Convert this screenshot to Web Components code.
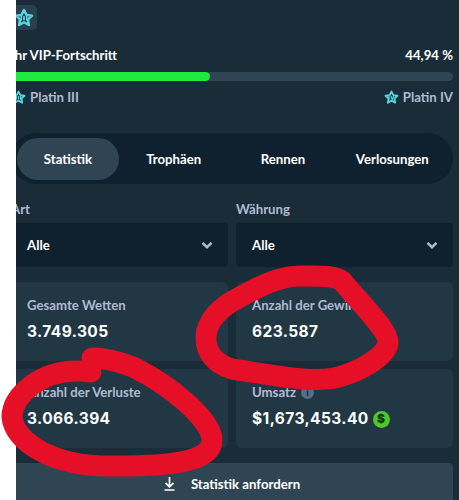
<!DOCTYPE html>
<html lang="de">
<head>
<meta charset="utf-8">
<title>VIP Statistik</title>
<style>
  html, body { margin: 0; height: 100%; background: #fff; overflow: hidden; }
  body { font-family: Lato, "Liberation Sans", sans-serif; }
</style>
</head>
<body>
<stats-page></stats-page>
<scribble-marks></scribble-marks>

<script>
const font = 'Lato, "Liberation Sans", sans-serif';

class StarIcon extends HTMLElement {
  constructor() {
    super();
    const size = this.getAttribute('size') || 16;
    const rank = this.getAttribute('rank') || 'III';
    const bars = rank === 'III'
      ? '<path d="M8.8 9.5v5.5M12 9.5v5.5M15.2 9.5v5.5" stroke-width="2" fill="none"/>'
      : '<path d="M8 9.5v5.5M11 9.5l2.2 5.5 2.3-5.5" stroke-width="2" fill="none"/>';
    this.attachShadow({ mode: 'open' }).innerHTML = `
      <style>
        :host { display: inline-flex; width: ${size}px; height: ${size}px; flex: none; color: #55d5df; }
        svg { width: 100%; height: 100%; stroke: currentColor; }
      </style>
      <svg viewBox="0 0 24 24">
        <path d="M12 2.5l2.9 5.8 6.6.9-4.8 4.5 1.2 6.6-5.9-3.2-5.9 3.2 1.2-6.6-4.8-4.5 6.6-.9z" fill="#1a2c38" stroke-width="3" stroke-linejoin="round"/>
        ${bars}
      </svg>`;
  }
}

const progressTemplate = document.createElement('template');
progressTemplate.innerHTML = `
  <style>
    :host { display: block; color: #fff; font-weight: 700; font-size: 13.2px; }
    .badge {
      width: 26px; height: 25px; border-radius: 5px; background: #2a3f4c;
      display: flex; align-items: center; justify-content: center; margin-bottom: 15px;
    }
    .row { display: flex; justify-content: space-between; align-items: center; height: 20px; }
    .track { height: 9px; border-radius: 5px; background: #2f4553; margin-top: 7px; }
    .fill { width: 44.94%; height: 100%; border-radius: 5px; background: #1fe83e; }
    .levels { margin-top: 6px; color: #b1bad3; }
    .level { display: flex; align-items: center; gap: 4px; }
  </style>
  <div class="badge"><star-icon size="20" rank="III"></star-icon></div>
  <div class="row"><span>Ihr VIP-Fortschritt</span><span>44,94 %</span></div>
  <div class="track"><div class="fill"></div></div>
  <div class="row levels">
    <span class="level"><star-icon size="15" rank="III"></star-icon>Platin III</span>
    <span class="level"><star-icon size="15" rank="IV"></star-icon>Platin IV</span>
  </div>
`;
class VipProgress extends HTMLElement {
  constructor() {
    super();
    this.attachShadow({ mode: 'open' }).appendChild(progressTemplate.content.cloneNode(true));
  }
}

const tabsTemplate = document.createElement('template');
tabsTemplate.innerHTML = `
  <style>
    :host {
      display: grid; grid-template-columns: 102px 1fr 1fr 1fr; align-items: stretch;
      height: 42px; padding: 5px 6px 4px; background: #0f212e; border-radius: 26px;
      color: #fff; font-weight: 700; font-size: 13.2px; text-align: center;
    }
    span { display: flex; align-items: center; justify-content: center; border-radius: 21px; }
    .active { background: #2f4553; }
  </style>
  <span class="active">Statistik</span><span>Trophäen</span><span>Rennen</span><span>Verlosungen</span>
`;
class TabBar extends HTMLElement {
  constructor() {
    super();
    this.attachShadow({ mode: 'open' }).appendChild(tabsTemplate.content.cloneNode(true));
  }
}

class FilterSelect extends HTMLElement {
  constructor() {
    super();
    this.attachShadow({ mode: 'open' }).innerHTML = `
      <style>
        :host { display: block; font-weight: 700; font-size: 13.2px; }
        label { display: block; color: #b1bad3; height: 16px; line-height: 16px; margin-bottom: 6px; }
        .box {
          height: 44px; box-sizing: border-box; padding: 0 15px 0 16px; border-radius: 4px;
          background: #0f212e; color: #fff; display: flex; align-items: center; justify-content: space-between;
        }
        svg { width: 12px; height: 12px; fill: none; stroke: #b1bad3; stroke-width: 2.4; }
      </style>
      <label>${this.getAttribute('label')}</label>
      <div class="box"><slot></slot>
        <svg viewBox="0 0 12 12"><path d="M1.5 3.8L6 8.2l4.5-4.4"/></svg>
      </div>`;
  }
}

class StatCard extends HTMLElement {
  constructor() {
    super();
    this.attachShadow({ mode: 'open' }).innerHTML = `
      <style>
        :host {
          display: flex; flex-direction: column; height: 79px; box-sizing: border-box;
          padding: 15px 16px 0; border-radius: 6px; background: #213743;
        }
        .label { color: #b1bad3; font-weight: 700; font-size: 13.2px; line-height: 16px; display: flex; align-items: center; gap: 5px; }
        .value {
          color: #fff; font-family: Inter, ${font}; font-weight: 700; font-size: 15.5px; line-height: 20px;
          margin-top: 9px; display: flex; align-items: center; gap: 4px; letter-spacing: .4px;
        }
      </style>
      <div class="label">${this.getAttribute('label')}<slot name="hint"></slot></div>
      <div class="value"><slot></slot><slot name="suffix"></slot></div>`;
  }
}

const buttonTemplate = document.createElement('template');
buttonTemplate.innerHTML = `
  <style>
    :host {
      display: flex; align-items: center; justify-content: center; gap: 16px;
      height: 42px; border-radius: 4px; background: #2f4553;
      color: #fff; font-weight: 700; font-size: 13.2px;
    }
    svg { width: 11px; height: 14px; fill: none; stroke: #fff; stroke-width: 1.7; }
  </style>
  <svg viewBox="0 0 11 14"><path d="M5.5 0v9.5M1.5 5.8l4 4 4-4M0.5 13h10"/></svg>
  <span><slot></slot></span>
`;
class RequestButton extends HTMLElement {
  constructor() {
    super();
    this.attachShadow({ mode: 'open' }).appendChild(buttonTemplate.content.cloneNode(true));
  }
}

const pageTemplate = document.createElement('template');
pageTemplate.innerHTML = `
  <style>
    :host {
      display: block; height: 500px; margin-left: 16px; overflow: hidden;
      background: #1a2c38; font-family: ${font};
    }
    .content { margin-left: -5px; padding: 5px 6px 0 0; }
    tab-bar { margin-top: 26px; }
    .filters, .cards { display: grid; grid-template-columns: 1fr 1fr; gap: 8px; }
    .filters { margin-top: 17px; }
    .cards { margin-top: 15px; }
    request-button { margin-top: 15px; }
    .info {
      width: 13px; height: 13px; border-radius: 50%; background: #557086; color: #1a2c38;
      font-size: 10px; font-weight: 900; display: flex; align-items: center; justify-content: center;
    }
    .coin {
      width: 17px; height: 17px; border-radius: 50%; background: #4cc72c; color: #123a10;
      font-size: 12px; font-weight: 900; display: flex; align-items: center; justify-content: center;
    }
  </style>
  <div class="content">
    <vip-progress></vip-progress>
    <tab-bar></tab-bar>
    <div class="filters">
      <filter-select label="Art">Alle</filter-select>
      <filter-select label="Währung">Alle</filter-select>
    </div>
    <div class="cards">
      <stat-card label="Gesamte Wetten">3.749.305</stat-card>
      <stat-card label="Anzahl der Gewinne">623.587</stat-card>
      <stat-card label="Anzahl der Verluste">3.066.394</stat-card>
      <stat-card label="Umsatz">
        <span slot="hint" class="info">i</span>
        $1,673,453.40
        <span slot="suffix" class="coin">$</span>
      </stat-card>
    </div>
    <request-button>Statistik anfordern</request-button>
  </div>
`;
class StatsPage extends HTMLElement {
  constructor() {
    super();
    this.attachShadow({ mode: 'open' }).appendChild(pageTemplate.content.cloneNode(true));
  }
}

// the two hand drawn red circles lie over everything else
class ScribbleMarks extends HTMLElement {
  constructor() {
    super();
    this.attachShadow({ mode: 'open' }).innerHTML = `
      <style>
        :host { position: absolute; left: 0; top: 0; width: 459px; height: 500px; pointer-events: none; }
        svg { display: block; }
        path { fill: none; stroke: #e60f28; stroke-width: 21; stroke-linecap: round; stroke-linejoin: round; }
      </style>
      <svg width="459" height="500" viewBox="0 0 459 500">
        <path d="M232 369C215 364 206 352 206 338C206 320 222 306 240 297C260 286 280 276 300 276C320 276 334 275 342 281C362 305 388 330 388 342C388 354 366 368 345 375C320 385 280 376 232 369Z"/>
        <path d="M91 372C70 369 50 372 32 385C20 394 12 405 12 417C14 440 50 468 117 466C170 466 212 462 212 440C212 420 170 385 133 367C115 360 100 358 92 358"/>
      </svg>`;
  }
}

customElements.define('star-icon', StarIcon);
customElements.define('vip-progress', VipProgress);
customElements.define('tab-bar', TabBar);
customElements.define('filter-select', FilterSelect);
customElements.define('stat-card', StatCard);
customElements.define('request-button', RequestButton);
customElements.define('stats-page', StatsPage);
customElements.define('scribble-marks', ScribbleMarks);
</script>
</body>
</html>
